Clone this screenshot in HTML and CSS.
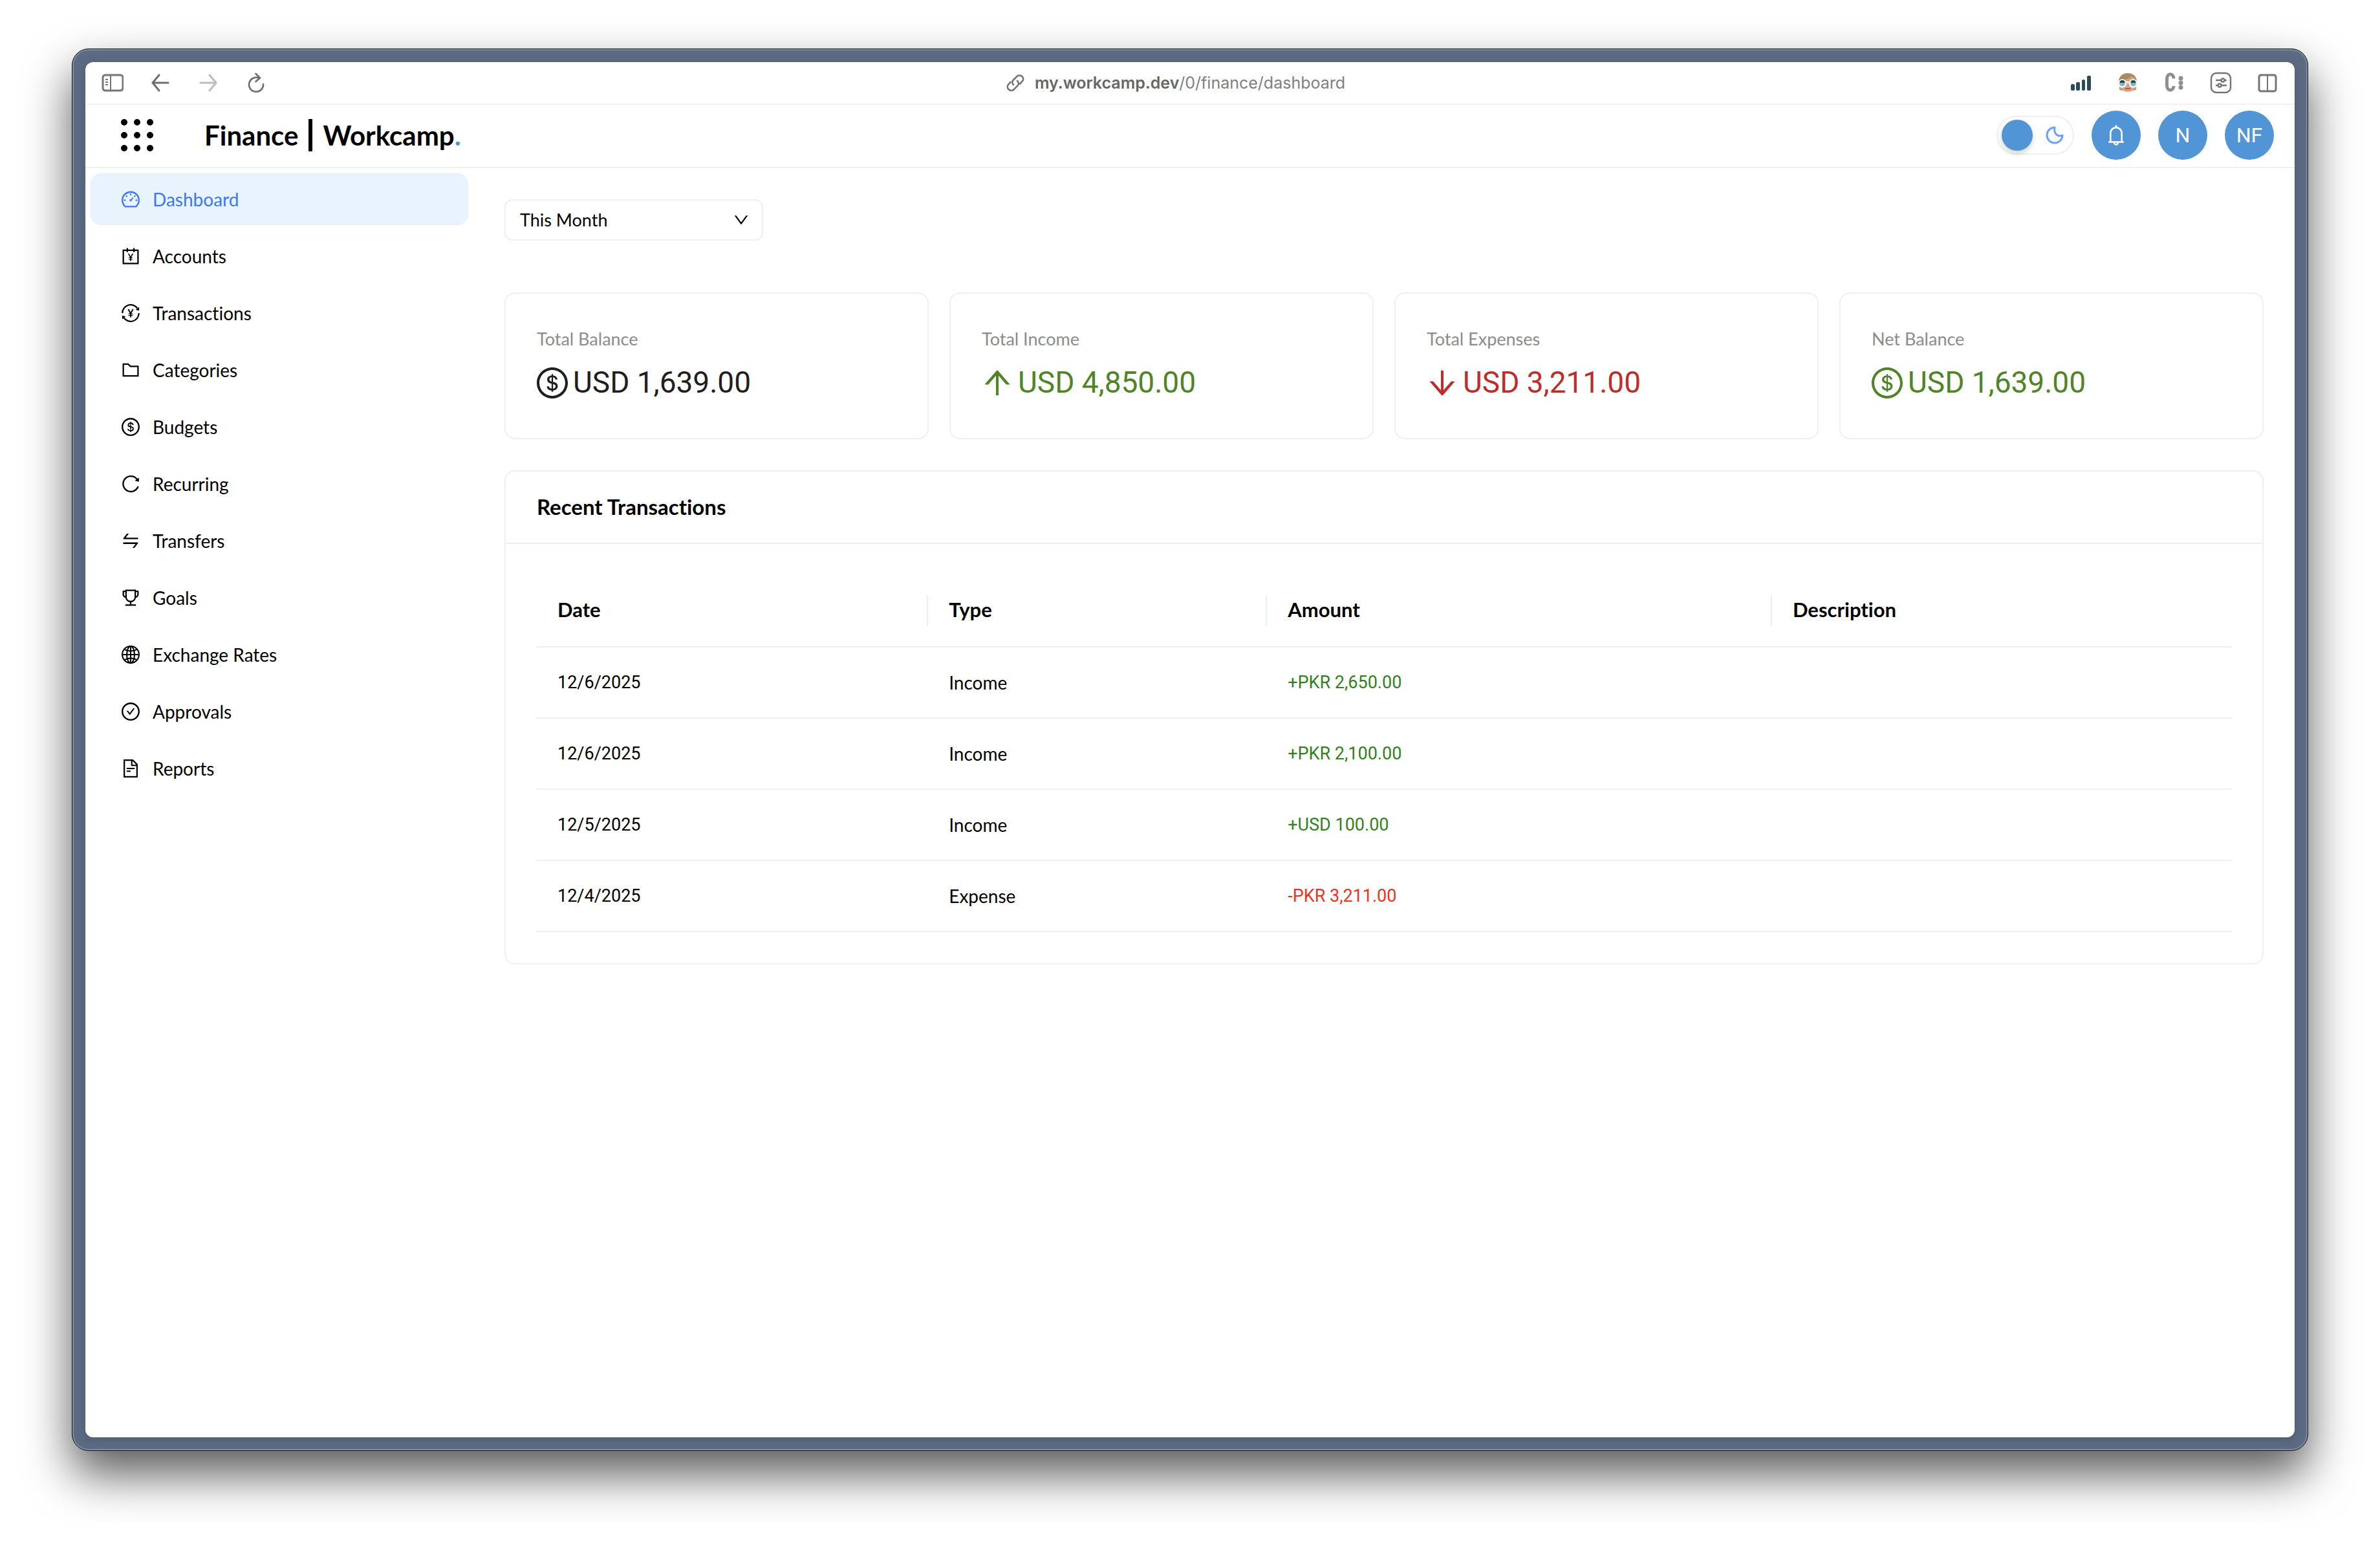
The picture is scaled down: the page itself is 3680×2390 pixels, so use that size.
FILE: index.html
```html
<!DOCTYPE html>
<html lang="en">
<head>
<meta charset="utf-8">
<meta name="viewport" content="width=device-width, initial-scale=1">
<title>Finance | Workcamp</title>
<link rel="stylesheet" href="styles.css">
</head>
<body>
<svg class="sprite" aria-hidden="true">
  <symbol id="i-dashboard" viewBox="64 64 896 896"><path d="M924.8 385.6a446.7 446.7 0 00-96-142.4 446.7 446.7 0 00-142.4-96C631.1 123.8 572.5 112 512 112s-119.1 11.8-174.4 35.2a446.7 446.7 0 00-142.4 96 446.7 446.7 0 00-96 142.4C75.8 440.9 64 499.5 64 560c0 132.7 58.3 257.7 159.9 343.1l1.7 1.4c5.8 4.8 13.1 7.5 20.6 7.5h531.7c7.5 0 14.8-2.7 20.6-7.5l1.7-1.4C901.7 817.7 960 692.7 960 560c0-60.5-11.9-119.1-35.2-174.4zM761.4 836H262.6A371.12 371.12 0 01140 560c0-99.4 38.7-192.8 109-263 70.3-70.3 163.7-109 263-109 99.4 0 192.8 38.7 263 109 70.3 70.3 109 163.7 109 263 0 105.6-44.5 205.5-122.6 276zM623.5 421.5a8.03 8.03 0 00-11.3 0L527.7 506c-18.7-5-39.4-.2-54.1 14.5a55.95 55.95 0 000 79.2 55.95 55.95 0 0079.2 0 55.87 55.87 0 0014.5-54.1l84.5-84.5c3.1-3.1 3.1-8.2 0-11.3l-28.3-28.3zM490 320h44c4.4 0 8-3.6 8-8v-80c0-4.4-3.6-8-8-8h-44c-4.4 0-8 3.6-8 8v80c0 4.4 3.6 8 8 8zm260 218v44c0 4.4 3.6 8 8 8h80c4.4 0 8-3.6 8-8v-44c0-4.4-3.6-8-8-8h-80c-4.4 0-8 3.6-8 8zm12.7-197.2l-31.1-31.1a8.03 8.03 0 00-11.3 0l-56.6 56.6a8.03 8.03 0 000 11.3l31.1 31.1c3.1 3.1 8.2 3.1 11.3 0l56.6-56.6c3.1-3.1 3.1-8.2 0-11.3zm-458.6-31.1a8.03 8.03 0 00-11.3 0l-31.1 31.1a8.03 8.03 0 000 11.3l56.6 56.6c3.1 3.1 8.2 3.1 11.3 0l31.1-31.1c3.1-3.1 3.1-8.2 0-11.3l-56.6-56.6zM262 530h-80c-4.4 0-8 3.6-8 8v44c0 4.4 3.6 8 8 8h80c4.4 0 8-3.6 8-8v-44c0-4.4-3.6-8-8-8z"/></symbol>
  <symbol id="i-account" viewBox="64 64 896 896"><path d="M880 184H712v-64c0-4.4-3.6-8-8-8h-56c-4.4 0-8 3.6-8 8v64H384v-64c0-4.4-3.6-8-8-8h-56c-4.4 0-8 3.6-8 8v64H144c-17.7 0-32 14.3-32 32v664c0 17.7 14.3 32 32 32h736c17.7 0 32-14.3 32-32V216c0-17.7-14.3-32-32-32zm-40 656H184V256h128v48c0 4.4 3.6 8 8 8h56c4.4 0 8-3.6 8-8v-48h256v48c0 4.4 3.6 8 8 8h56c4.4 0 8-3.6 8-8v-48h128v584z"/><path d="M404 386L512 580L620 386M512 570V750" fill="none" stroke="currentColor" stroke-width="54"/><path d="M416 592H608M416 670H608" fill="none" stroke="currentColor" stroke-width="36"/></symbol>
  <symbol id="i-transaction" viewBox="64 64 896 896"><path d="M104 512A408 408 0 01846 276M920 512A408 408 0 01178 748" fill="none" stroke="currentColor" stroke-width="72"/><path d="M394 322L512 530L630 322M512 520V716" fill="none" stroke="currentColor" stroke-width="60"/><path d="M404 550H620M404 630H620" fill="none" stroke="currentColor" stroke-width="42"/><path d="M930 210V390L760 348zM94 814V634L264 676z"/></symbol>
  <symbol id="i-folder" viewBox="64 64 896 896"><path d="M880 298.4H521L403.7 186.2a8.15 8.15 0 00-5.5-2.2H144c-17.7 0-32 14.3-32 32v592c0 17.7 14.3 32 32 32h736c17.7 0 32-14.3 32-32V330.4c0-17.7-14.3-32-32-32zM840 768H184V256h188.5l119.6 114.4H840V768z"/></symbol>
  <symbol id="i-dollar" viewBox="64 64 896 896"><path d="M512 64C264.6 64 64 264.6 64 512s200.6 448 448 448 448-200.6 448-448S759.4 64 512 64zm0 820c-205.4 0-372-166.6-372-372s166.6-372 372-372 372 166.6 372 372-166.6 372-372 372zm47.7-395.2l-25.4-5.9V348.6c38 5.2 61.5 29 65.5 58.2.5 4 3.9 6.9 7.9 6.9h44.9c4.7 0 8.4-4.1 8-8.8-6.1-62.3-57.4-102.3-125.9-109.2V263c0-4.4-3.6-8-8-8h-28.1c-4.4 0-8 3.6-8 8v33c-70.8 6.9-126.2 46-126.2 119 0 67.6 49.8 100.2 102.1 112.7l24.7 6.3v142.7c-44.2-5.9-69-29.5-74.1-61.3-.6-3.8-4-6.6-7.9-6.6H363c-4.7 0-8.4 4-8 8.7 4.5 55 46.2 105.6 135.2 112.1V761c0 4.4 3.6 8 8 8h28.4c4.4 0 8-3.6 8-8.1l-.2-31.7c78.3-6.9 134.3-48.8 134.3-124-.1-69.4-44.2-100.4-109-116.4zm-68.6-16.2c-5.6-1.6-10.3-3.1-15-5-33.8-12.2-49.5-31.9-49.5-57.3 0-36.3 27.5-57 64.5-61.7v124zM534.3 677V543.3c3.1.9 5.9 1.6 8.8 2.2 47.3 14.4 63.2 34.4 63.2 65.1 0 39.1-29.4 62.6-72 66.4z"/></symbol>
  <symbol id="i-reload" viewBox="64 64 896 896"><path d="M909.1 209.3l-56.4 44.1C775.8 155.1 656.2 92 521.9 92 290 92 102.3 279.5 102 511.5 101.7 743.7 289.8 932 521.9 932c181.3 0 335.8-115 394.6-276.1 1.5-4.2-.7-8.9-4.9-10.3l-56.7-19.5a8 8 0 00-10.1 4.8c-1.8 5-3.8 10-5.9 14.9-17.3 41-42.1 77.8-73.7 109.4A344.77 344.77 0 01655.9 829c-42.3 17.9-87.4 27-133.8 27-46.5 0-91.5-9.1-133.8-27A341.5 341.5 0 01279 755.2a342.16 342.16 0 01-73.7-109.4c-17.9-42.4-27-87.4-27-133.9s9.1-91.5 27-133.9c17.3-41 42.1-77.8 73.7-109.4 31.6-31.6 68.4-56.4 109.3-73.8 42.3-17.9 87.4-27 133.8-27 46.5 0 91.5 9.1 133.8 27a341.5 341.5 0 01109.3 73.8c9.9 9.9 19.2 20.4 27.8 31.4l-60.2 47a8 8 0 003 14.1l175.6 43c5 1.2 9.9-2.6 9.9-7.7l.8-180.9c-.1-6.6-7.8-10.3-13-6.2z"/></symbol>
  <symbol id="i-swap" viewBox="64 64 896 896"><path d="M847.9 592H152c-4.4 0-8 3.6-8 8v60c0 4.4 3.6 8 8 8h605.2L612.9 851c-4.1 5.2-.4 13 6.3 13h72.5c4.9 0 9.5-2.2 12.6-6.1l168.8-214.1c16.5-21 1.6-51.8-25.2-51.8zM872 356H266.8l144.3-183c4.1-5.2.4-13-6.3-13h-72.5c-4.9 0-9.5 2.2-12.6 6.1L150.9 380.2c-16.5 21-1.6 51.8 25.1 51.8h696c4.4 0 8-3.6 8-8v-60c0-4.4-3.6-8-8-8z"/></symbol>
  <symbol id="i-trophy" viewBox="64 64 896 896"><path d="M868 160h-92v-40c0-4.4-3.6-8-8-8H256c-4.4 0-8 3.6-8 8v40h-92a44 44 0 00-44 44v148c0 81.7 60 149.6 138.2 162C265.7 630.2 359 721.7 476 734.5v105.2H280c-17.7 0-32 14.3-32 32V904c0 4.4 3.6 8 8 8h512c4.4 0 8-3.6 8-8v-32.3c0-17.7-14.3-32-32-32H548V734.5C665 721.7 758.3 630.2 773.8 514 852 501.6 912 433.7 912 352V204a44 44 0 00-44-44zM184 352V232h64v207.6a91.99 91.99 0 01-64-87.6zm520 128c0 49.1-19.1 95.4-53.9 130.1-34.8 34.8-81 53.9-130.1 53.9h-16c-49.1 0-95.4-19.1-130.1-53.9-34.8-34.8-53.9-81-53.9-130.1V184h384v296zm136-128c0 41-26.9 75.8-64 87.6V232h64v120z"/></symbol>
  <symbol id="i-globe" viewBox="64 64 896 896"><g fill="none" stroke="currentColor" stroke-width="66"><circle cx="512" cy="512" r="414"/><ellipse cx="512" cy="512" rx="190" ry="414"/><path d="M98 512H926M512 98V926M200 250Q512 420 824 250M200 774Q512 604 824 774"/></g></symbol>
  <symbol id="i-check" viewBox="64 64 896 896"><path d="M699 353h-46.9c-10.2 0-19.9 4.9-25.9 13.3L469 584.3l-71.2-98.8c-6-8.3-15.6-13.3-25.9-13.3H325c-6.5 0-10.3 7.4-6.5 12.7l124.6 172.8a31.8 31.8 0 0051.7 0l210.6-292c3.9-5.3.1-12.7-6.4-12.7z"/><path d="M512 64C264.6 64 64 264.6 64 512s200.6 448 448 448 448-200.6 448-448S759.4 64 512 64zm0 820c-205.4 0-372-166.6-372-372s166.6-372 372-372 372 166.6 372 372-166.6 372-372 372z"/></symbol>
  <symbol id="i-file" viewBox="64 64 896 896"><path d="M854.6 288.6L639.4 73.4c-6-6-14.1-9.4-22.6-9.4H192c-17.7 0-32 14.3-32 32v832c0 17.7 14.3 32 32 32h640c17.7 0 32-14.3 32-32V311.3c0-8.5-3.4-16.7-9.4-22.7zM790.2 326H602V137.8L790.2 326zm1.8 562H232V136h302v216a42 42 0 0042 42h216v494zM504 618H320c-4.4 0-8 3.6-8 8v48c0 4.4 3.6 8 8 8h184c4.4 0 8-3.6 8-8v-48c0-4.4-3.6-8-8-8zM312 490v48c0 4.4 3.6 8 8 8h384c4.4 0 8-3.6 8-8v-48c0-4.4-3.6-8-8-8H320c-4.4 0-8 3.6-8 8z"/></symbol>
  <symbol id="i-up" viewBox="64 64 896 896"><path d="M868 545.5L536.1 163a31.96 31.96 0 00-48.3 0L156 545.5a7.97 7.97 0 006 13.2h81c4.6 0 9-2 12.1-5.5L474 300.9V864c0 4.4 3.6 8 8 8h60c4.4 0 8-3.6 8-8V300.9l218.9 252.3c3 3.5 7.4 5.5 12.1 5.5h81c6.8 0 10.5-8 6-13.2z"/></symbol>
  <symbol id="i-down" viewBox="64 64 896 896"><path transform="rotate(180 512 512)" d="M868 545.5L536.1 163a31.96 31.96 0 00-48.3 0L156 545.5a7.97 7.97 0 006 13.2h81c4.6 0 9-2 12.1-5.5L474 300.9V864c0 4.4 3.6 8 8 8h60c4.4 0 8-3.6 8-8V300.9l218.9 252.3c3 3.5 7.4 5.5 12.1 5.5h81c6.8 0 10.5-8 6-13.2z"/></symbol>
  <symbol id="i-chevron" viewBox="64 64 896 896"><path d="M884 256h-75c-5.1 0-9.9 2.5-12.9 6.6L512 654.2 227.9 262.6c-3-4.1-7.8-6.6-12.9-6.6h-75c-6.5 0-10.3 7.4-6.5 12.7l352.6 486.1c12.8 17.6 39 17.6 51.7 0l352.6-486.1c3.9-5.3.1-12.7-6.4-12.7z"/></symbol>
  <symbol id="i-bell" viewBox="64 64 896 896"><path d="M816 768h-24V428c0-141.1-104.3-257.7-240-277.1V112c0-22.1-17.9-40-40-40s-40 17.9-40 40v38.9c-135.7 19.4-240 136-240 277.1v340h-24c-17.7 0-32 14.3-32 32v32c0 4.4 3.6 8 8 8h216c0 61.8 50.2 112 112 112s112-50.2 112-112h216c4.4 0 8-3.6 8-8v-32c0-17.7-14.3-32-32-32zM512 888c-26.5 0-48-21.5-48-48h96c0 26.5-21.5 48-48 48zM304 768V428c0-55.6 21.6-107.8 60.9-147.1S456.4 220 512 220c55.6 0 107.8 21.6 147.1 60.9S720 372.4 720 428v340H304z"/></symbol>
</svg>

<div class="window">
  <div class="page">
    <div class="toolbar">
      <div class="tools">
        <button class="tool" type="button" aria-label="Show sidebar"><svg viewBox="0 0 34 34"><g fill="none" stroke="#757575" stroke-width="2"><rect x="2" y="5" width="31" height="24" rx="4" stroke-width="3"/><path d="M14 5V29M6 12H10M6 16H10M6 20H10"/></g></svg></button>
        <button class="tool" type="button" aria-label="Back"><svg viewBox="0 0 34 34"><path fill="none" stroke="#6e6e6e" stroke-width="3" stroke-linecap="round" stroke-linejoin="round" d="M29 17H6M15 5L5 17L15 29"/></svg></button>
        <button class="tool" type="button" aria-label="Forward"><svg viewBox="0 0 34 34"><path fill="none" stroke="#bdbdbd" stroke-width="3" stroke-linecap="round" stroke-linejoin="round" d="M5 17H28M19 5L29 17L19 29"/></svg></button>
        <button class="tool" type="button" aria-label="Reload"><svg viewBox="0 0 34 34"><path fill="none" stroke="#6e6e6e" stroke-width="2.6" stroke-linecap="round" stroke-linejoin="round" d="M28 19A11 11 0 1 1 22 10M16.500 3L23 9.500L16.500 15"/></svg></button>
      </div>
      <a class="address" href="#"><svg viewBox="0 0 28 28"><g fill="none" stroke="#757575" stroke-width="2.600" stroke-linecap="round"><path d="M11 17C8.500 14.500 9 11.500 11 9.500L16 4.500C18.500 2 22 2 24.500 4.300C27 6.800 26.500 10 24.300 12.200L21 15.500"/><path d="M17 11C19.500 13.500 19.500 16.500 17.300 18.700L12 24C9.500 26.500 6 26.500 3.500 24C1 21.500 1.500 18 3.700 15.800L6.500 13"/></g></svg><span><strong>my.workcamp.dev</strong>/0/finance/dashboard</span></a>
      <div class="tools tools-end">
        <button class="tool" type="button" aria-label="Signal"><svg viewBox="0 0 34 34"><g fill="#2a4b59"><rect x="1" y="19" width="6" height="10" rx="2"/><rect x="9" y="16" width="6" height="13" rx="2"/><rect x="18" y="12" width="5" height="17" rx="2"/><rect x="26" y="6" width="6" height="23" rx="2"/></g></svg></button>
        <button class="tool" type="button" aria-label="Profile"><svg viewBox="0 0 34 34"><path d="M4 14H30L30 28L26 29H8L4 28z" fill="#bd9c70"/><circle cx="17" cy="17" r="14" fill="#d9a283"/><path d="M3 14C4 6 10 2 17 2S30 6 31 14L29 13C27 9 25 8 23 7C20 11 12 12 8 13z" fill="#a58c62"/><g fill="#86b3bd" stroke="#eef7f8" stroke-width="2.500"><circle cx="8.500" cy="18" r="5.500"/><circle cx="25.500" cy="18" r="5.500"/><path d="M14 17Q17 15 20 17" fill="none"/></g><path d="M4.500 17A4 4 0 0112.500 17zM21.500 17A4 4 0 0129.500 17z" fill="#234452"/><path d="M13 26H21" stroke="#a85f4b" stroke-width="2"/></svg></button>
        <button class="tool" type="button" aria-label="Extension"><svg viewBox="0 0 34 34"><path d="M16 10.500C16 2 5.500 1 5.500 11V21C5.500 31 16 30 16 22" fill="none" stroke="#8f8f8f" stroke-width="5"/><g fill="#8f8f8f"><circle cx="27" cy="10" r="3.500"/><circle cx="27" cy="17" r="3.500"/><circle cx="27" cy="24" r="3.500"/></g></svg></button>
        <button class="tool" type="button" aria-label="Page settings"><svg viewBox="0 0 34 34"><g fill="none" stroke="#757575" stroke-width="2.400" stroke-linecap="round"><rect x="2" y="2" width="30" height="30" rx="8"/><path d="M10 13H17M23 13H25M10 21H11M18 21H25"/><circle cx="20" cy="13" r="2.500"/><circle cx="15" cy="21" r="2.500"/></g></svg></button>
        <button class="tool" type="button" aria-label="Split view"><svg viewBox="0 0 34 34"><g fill="none" stroke="#757575" stroke-width="3"><rect x="4" y="5" width="26" height="25" rx="3"/><path d="M17 5V30" stroke-width="2"/></g></svg></button>
      </div>
    </div>

    <header class="header">
      <button class="apps" type="button" aria-label="Apps"><svg viewBox="0 0 50 50"><circle cx="5" cy="5" r="5"/><circle cx="25" cy="5" r="5"/><circle cx="45" cy="5" r="5"/><circle cx="5" cy="25" r="5"/><circle cx="25" cy="25" r="5"/><circle cx="45" cy="25" r="5"/><circle cx="5" cy="45" r="5"/><circle cx="25" cy="45" r="5"/><circle cx="45" cy="45" r="5"/></svg></button>
      <h1 class="brand"><span>Finance</span><span class="bar"></span><span>Workcamp<span class="dot">.</span></span></h1>
      <div class="actions">
        <label class="toggle"><input type="checkbox" aria-label="Dark mode"><svg viewBox="0 0 28 28"><path fill="none" stroke="#6ea2f8" stroke-width="3" stroke-linejoin="round" d="M14 2A12 12 0 1 0 26 14C20 17 12 13 14 2z"/></svg></label>
        <button class="round" type="button" aria-label="Notifications"><svg><use href="#i-bell"/></svg></button>
        <button class="round" type="button">N</button>
        <button class="round" type="button">NF</button>
      </div>
    </header>

    <div class="body">
      <nav class="sidebar">
        <a class="active" href="#"><svg><use href="#i-dashboard"/></svg>Dashboard</a>
        <a href="#"><svg><use href="#i-account"/></svg>Accounts</a>
        <a href="#"><svg><use href="#i-transaction"/></svg>Transactions</a>
        <a href="#"><svg><use href="#i-folder"/></svg>Categories</a>
        <a href="#"><svg><use href="#i-dollar"/></svg>Budgets</a>
        <a href="#"><svg><use href="#i-reload"/></svg>Recurring</a>
        <a href="#"><svg><use href="#i-swap"/></svg>Transfers</a>
        <a href="#"><svg><use href="#i-trophy"/></svg>Goals</a>
        <a href="#"><svg><use href="#i-globe"/></svg>Exchange Rates</a>
        <a href="#"><svg><use href="#i-check"/></svg>Approvals</a>
        <a href="#"><svg><use href="#i-file"/></svg>Reports</a>
      </nav>

      <main class="main">
        <div class="period">
          <select aria-label="Period"><option>This Month</option></select>
          <svg><use href="#i-chevron"/></svg>
        </div>

        <section class="stats">
          <div class="stat"><div class="label">Total Balance</div><div class="value"><svg><use href="#i-dollar"/></svg>USD 1,639.00</div></div>
          <div class="stat"><div class="label">Total Income</div><div class="value up"><svg><use href="#i-up"/></svg>USD 4,850.00</div></div>
          <div class="stat"><div class="label">Total Expenses</div><div class="value down"><svg><use href="#i-down"/></svg>USD 3,211.00</div></div>
          <div class="stat"><div class="label">Net Balance</div><div class="value up"><svg><use href="#i-dollar"/></svg>USD 1,639.00</div></div>
        </section>

        <section class="panel">
          <h2>Recent Transactions</h2>
          <div class="panel-body">
            <table>
              <colgroup><col class="c-date"><col class="c-type"><col class="c-amount"><col></colgroup>
              <thead><tr><th><div>Date</div></th><th><div>Type</div></th><th><div>Amount</div></th><th><div>Description</div></th></tr></thead>
              <tbody>
                <tr><td class="num">12/6/2025</td><td>Income</td><td class="num in">+PKR 2,650.00</td><td></td></tr>
                <tr><td class="num">12/6/2025</td><td>Income</td><td class="num in">+PKR 2,100.00</td><td></td></tr>
                <tr><td class="num">12/5/2025</td><td>Income</td><td class="num in">+USD 100.00</td><td></td></tr>
                <tr><td class="num">12/4/2025</td><td>Expense</td><td class="num out">-PKR 3,211.00</td><td></td></tr>
              </tbody>
            </table>
          </div>
        </section>
      </main>
    </div>
  </div>
</div>
</body>
</html>
```
FILE: styles.css
```css
* { box-sizing: border-box; }

:root {
  --line: #f0f0f0;
  --blue: #5195d6;
  --text: Lato, "Open Sans", sans-serif;
  --figures: Roboto, "Liberation Sans", sans-serif;
}

body {
  margin: 0;
  min-height: 100vh;
  padding: 75px 111px 147px;
  display: flex;
  flex-direction: column;
  background: #fff;
  color: #000;
  font-family: var(--text);
  font-size: 28px;
  line-height: 44px;
  font-variant-ligatures: none;
}

svg { display: block; flex: none; fill: currentColor; }
.sprite { position: absolute; width: 0; height: 0; }
a { color: inherit; text-decoration: none; }
button { padding: 0; border: 0; background: none; color: inherit; font: inherit; }

.window {
  flex: 1;
  display: flex;
  padding: 20px;
  border: 1px solid #14181c;
  border-radius: 26px;
  background: #5c6b83;
  box-shadow: inset 0 0 0 2px #7f8b9f, 0 36px 72px rgba(0, 0, 0, .65);
}

.page {
  flex: 1;
  min-width: 0;
  border-radius: 12px;
  background: #fff;
  box-shadow: 0 3px 14px rgba(40, 60, 70, .35);
}

/* Browser toolbar */
.toolbar {
  display: grid;
  grid-template-columns: 1fr auto 1fr;
  align-items: center;
  height: 66px;
  padding: 0 25px;
  border-bottom: 2px solid var(--line);
}
.tools { display: flex; gap: 40px; }
.tools-end { justify-content: flex-end; gap: 38px; }
.tool svg { width: 34px; height: 34px; }
.address {
  display: flex;
  align-items: center;
  gap: 16px;
  padding-right: 44px;
  color: #808080;
  font-family: Inter, Roboto, sans-serif;
  font-size: 25px;
  line-height: 32px;
}
.address strong { color: #666; font-weight: 600; }
.address svg { width: 28px; height: 28px; }

/* App header */
.header {
  display: flex;
  align-items: center;
  height: 98px;
  padding: 0 32px 2px 55px;
  border-bottom: 2px solid var(--line);
}
.apps svg { width: 50px; height: 50px; }
.brand {
  display: flex;
  align-items: center;
  gap: 16px;
  margin: 0 0 0 79px;
  font-size: 42px;
  font-weight: 700;
  line-height: 50px;
}
.bar { width: 6px; height: 50px; background: #000; }
.dot { color: var(--blue); }
.actions { display: flex; align-items: center; gap: 27px; margin-left: auto; }
.toggle {
  display: flex;
  align-items: center;
  justify-content: space-between;
  width: 120px;
  height: 60px;
  padding: 0 14px 0 6px;
  border: 2px solid var(--line);
  border-radius: 30px;
}
.toggle input {
  appearance: none;
  width: 48px;
  height: 48px;
  margin: 0;
  border-radius: 50%;
  background: var(--blue);
  box-shadow: 0 4px 8px rgba(0, 35, 11, .2);
}
.toggle svg { width: 28px; height: 28px; }
.round {
  display: flex;
  align-items: center;
  justify-content: center;
  width: 76px;
  height: 76px;
  border-radius: 50%;
  background: var(--blue);
  color: #fff;
  font-family: var(--figures);
  font-size: 32px;
}
.round svg { width: 32px; height: 32px; }

/* Layout */
.body { display: flex; }
.sidebar {
  flex: none;
  width: 600px;
  padding: 8px;
  display: flex;
  flex-direction: column;
  gap: 8px;
}
.sidebar a {
  display: flex;
  align-items: center;
  gap: 20px;
  height: 80px;
  padding: 0 48px;
  border-radius: 16px;
}
.sidebar .active { background: #e9f3fe; color: #3b78f6; }
.sidebar svg { width: 28px; height: 28px; }
.main { flex: 1; min-width: 0; padding: 48px; }

.period { position: relative; width: 400px; margin-bottom: 80px; }
.period select {
  display: block;
  appearance: none;
  width: 100%;
  height: 64px;
  padding: 0 22px 2px;
  border: 2px solid var(--line);
  border-radius: 12px;
  background: #fff;
  color: #000;
  font-family: inherit;
  font-size: 27px;
}
.period svg {
  position: absolute;
  top: 20px;
  right: 22px;
  width: 24px;
  height: 24px;
  pointer-events: none;
}

.stats {
  display: grid;
  grid-template-columns: repeat(4, 1fr);
  gap: 32px;
  margin-bottom: 48px;
}
.stat { padding: 48px; border: 2px solid var(--line); border-radius: 16px; }
.label { margin-bottom: 8px; color: #8c8c8c; font-size: 27px; }
.value {
  display: flex;
  align-items: center;
  gap: 8px;
  color: #1f1f1f;
  font-family: var(--figures);
  font-size: 46px;
  line-height: 75px;
}
.value svg { width: 48px; height: 48px; }
.up { color: #518428; }
.down { color: #bc2e2c; }

.panel { border: 2px solid var(--line); border-radius: 16px; }
.panel h2 {
  margin: 0;
  padding: 32px 48px 34px;
  border-bottom: 2px solid var(--line);
  font-size: 33px;
  font-weight: 700;
  line-height: 44px;
}
.panel-body { padding: 48px; }
table { width: 100%; table-layout: fixed; border-collapse: separate; border-spacing: 0; }
.c-date { width: 23.1%; }
.c-type { width: 20%; }
.c-amount { width: 29.8%; }
th { padding: 31px 0; border-bottom: 2px solid var(--line); text-align: left; font-size: 31px; font-weight: 700; }
th div { height: 48px; padding: 0 32px; border-right: 2px solid #e6f0fa; line-height: 44px; }
th:last-child div { border-right: 0; }
td { height: 110px; padding: 0 32px; border-bottom: 2px solid var(--line); }
.num { font-family: var(--figures); font-size: 27px; }
.in { color: #348021; }
.out { color: #ea3323; }
```
